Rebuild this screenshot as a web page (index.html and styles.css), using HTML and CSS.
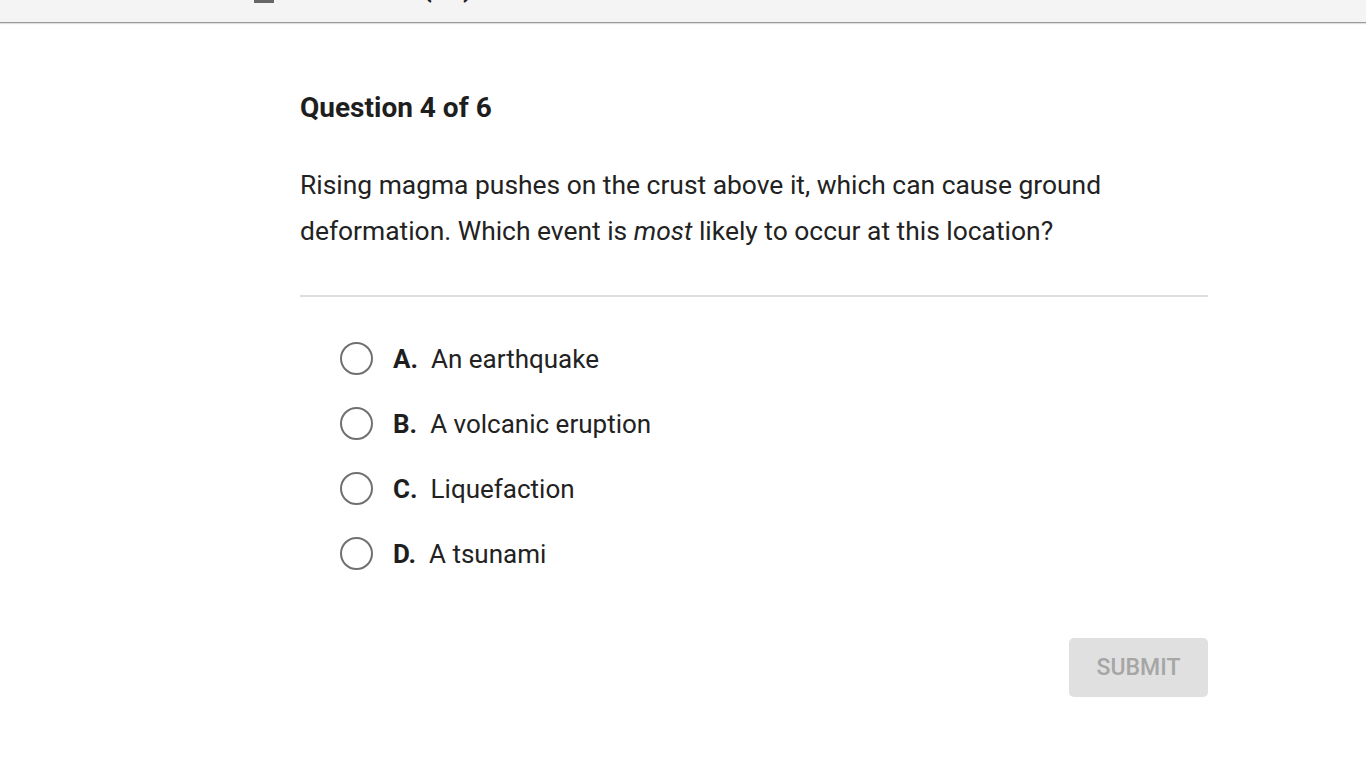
FILE: index.html
```html
<!DOCTYPE html>
<html>
<head>
<meta charset="utf-8">
<link rel="stylesheet" href="styles.css">
</head>
<body>
<header class="topbar">
  <div class="topbar-inner">
    <span class="menu-icon"><span></span><span></span><span></span></span>
    <span class="topbar-title">Unit Test (T2)</span>
  </div>
</header>
<main class="quiz">
  <h1 class="q-title">Question 4 of 6</h1>
  <p class="q-text">Rising magma pushes on the crust above it, which can cause ground deformation. Which event is <em>most</em> likely to occur at this location?</p>
  <hr class="divider">
  <ul class="options">
    <li class="option"><span class="radio"></span><span class="letter">A.</span><span class="answer">An earthquake</span></li>
    <li class="option"><span class="radio"></span><span class="letter">B.</span><span class="answer">A volcanic eruption</span></li>
    <li class="option"><span class="radio"></span><span class="letter">C.</span><span class="answer">Liquefaction</span></li>
    <li class="option"><span class="radio"></span><span class="letter">D.</span><span class="answer">A tsunami</span></li>
  </ul>
  <div class="actions">
    <button class="submit" disabled>SUBMIT</button>
  </div>
</main>
</body>
</html>
```
FILE: styles.css
```css
html, body {
  margin: 0;
  padding: 0;
  background: #ffffff;
  font-family: Roboto, "Liberation Sans", sans-serif;
  color: #222222;
}

.topbar {
  height: 22px;
  background: #f4f4f4;
  border-bottom: 1px solid #9a9a9a;
  box-shadow: 0 1px 1px rgba(0,0,0,0.12);
  overflow: hidden;
}

.topbar-inner {
  display: flex;
  align-items: flex-end;
  height: 22px;
  margin-top: -19px;
  padding-left: 254px;
}

.menu-icon {
  display: flex;
  flex-direction: column;
  gap: 5px;
  width: 20px;
}

.menu-icon span {
  display: block;
  height: 3px;
  background: #666666;
}

.topbar-title {
  margin-left: 38px;
  font-size: 26px;
  font-weight: 700;
  color: #222;
  line-height: 26px;
  position: relative;
  top: -2px;
}

.quiz {
  width: 908px;
  margin: 0 0 0 300px;
}

.q-title {
  margin: 0;
  padding-top: 67px;
  font-size: 28px;
  font-weight: 700;
  line-height: 36px;
  color: #1e1e1e;
}

.q-text {
  margin: 36px 0 0 0;
  font-size: 26.4px;
  line-height: 46px;
  color: #222222;
}

.q-text em {
  font-style: italic;
}

.divider {
  margin: 41px 0 0 0;
  border: 0;
  height: 2px;
  background: #dddddd;
}

.options {
  list-style: none;
  margin: 29px 0 0 0;
  padding: 0 0 0 40px;
}

.option {
  display: flex;
  align-items: center;
  height: 65px;
  font-size: 26px;
}

.radio {
  box-sizing: border-box;
  width: 33px;
  height: 33px;
  border: 2px solid #707070;
  border-radius: 50%;
  margin-right: 20px;
  flex: none;
}

.letter {
  font-weight: 700;
  margin-right: 13px;
  color: #1e1e1e;
}

.answer {
  color: #222222;
}

.actions {
  display: flex;
  justify-content: flex-end;
  margin-top: 52px;
}

.submit {
  width: 139px;
  height: 59px;
  border: 0;
  border-radius: 5px;
  background: #e0e0e0;
  color: #a6a6a6;
  font-family: Roboto, "Liberation Sans", sans-serif;
  font-size: 23px;
  font-weight: 500;
  padding: 0;
}
```
